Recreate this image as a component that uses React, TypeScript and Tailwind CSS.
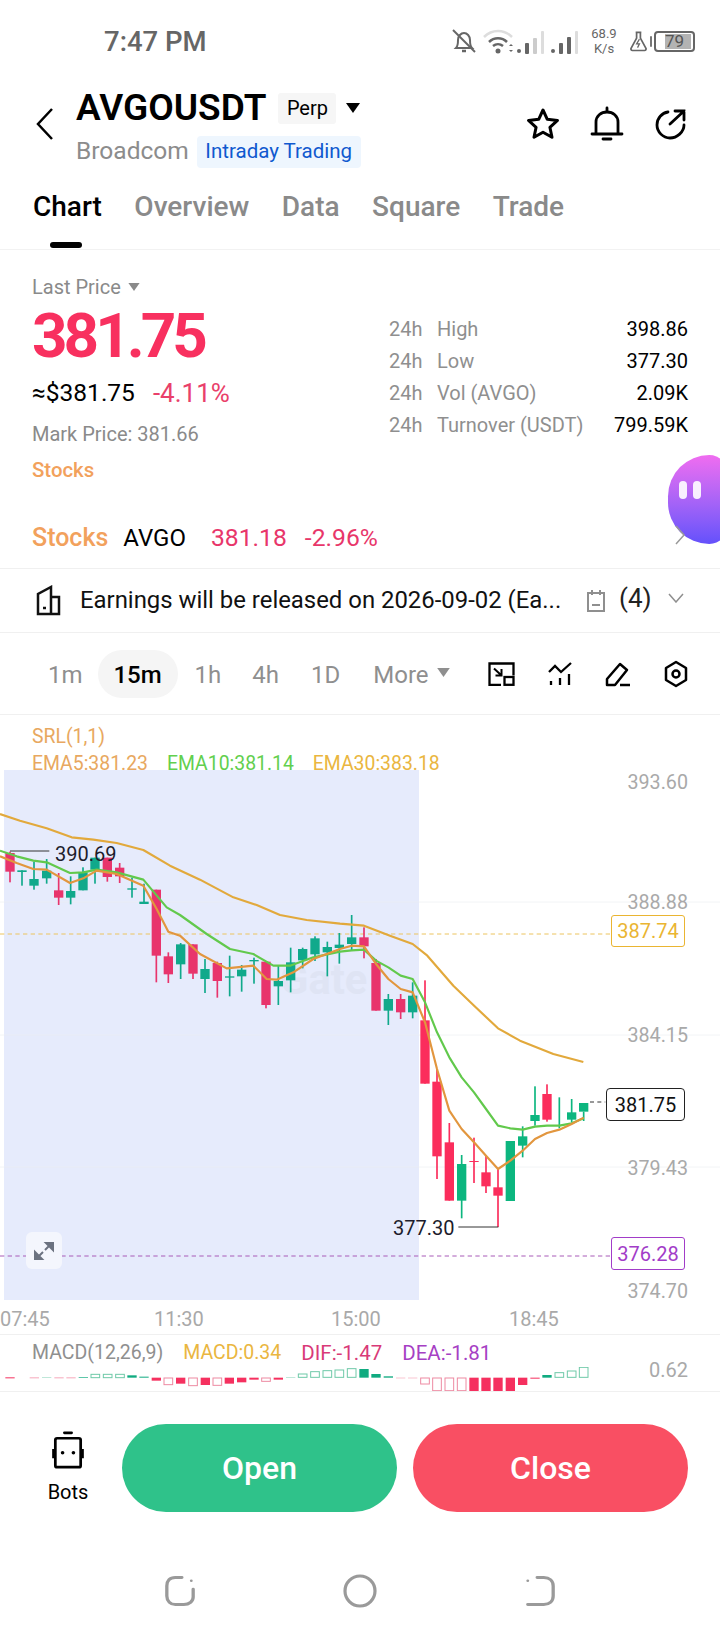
import React from "react";

type Candle = [number, number, number, number, number, boolean];

// chart coordinates are 3x page pixels, so the numbers read straight off a 3x crop
const leftCandles: Candle[] = [
  [30, 218, 222, 278, 310, false],
  [66, 274, 274, 279, 320, true],
  [102, 248, 300, 320, 332, true],
  [140, 240, 275, 298, 314, true],
  [176, 282, 334, 356, 378, false],
  [212, 292, 336, 356, 376, true],
  [249, 265, 280, 334, 334, true],
  [285, 236, 236, 272, 314, true],
  [322, 236, 236, 294, 308, false],
  [359, 252, 266, 292, 312, false],
  [396, 296, 328, 332, 356, true],
  [432, 314, 368, 375, 375, true],
  [469, 332, 332, 530, 610, false],
  [505, 520, 532, 586, 612, false],
  [542, 492, 496, 556, 600, true],
  [579, 496, 496, 584, 600, false],
  [615, 540, 570, 600, 642, true],
  [652, 548, 552, 606, 656, false],
  [689, 530, 592, 596, 652, true],
  [725, 558, 572, 592, 638, true],
  [762, 536, 543, 547, 614, true],
  [798, 548, 548, 678, 688, false],
  [835, 560, 606, 622, 678, true],
  [872, 506, 550, 604, 640, true],
  [908, 506, 510, 544, 568, true],
  [945, 472, 478, 526, 546, true],
  [982, 488, 504, 520, 592, true],
  [1018, 462, 497, 507, 554, true],
];

const rightCandles: Candle[] = [
  [35, 108, 175, 195, 215, true],
  [72, 145, 175, 202, 238, false],
  [108, 240, 252, 395, 395, false],
  [145, 345, 360, 395, 438, true],
  [182, 345, 360, 400, 420, false],
  [218, 310, 350, 400, 418, true],
  [255, 304, 424, 614, 614, false],
  [291, 570, 608, 832, 900, false],
  [328, 732, 790, 965, 965, false],
  [365, 828, 855, 965, 1018, true],
  [402, 776, 846, 849, 912, false],
  [438, 830, 880, 922, 942, false],
  [474, 870, 925, 950, 1044, false],
  [511, 786, 786, 966, 966, true],
  [548, 742, 772, 800, 835, true],
  [585, 622, 708, 726, 740, true],
  [621, 616, 645, 722, 728, false],
  [658, 655, 738, 741, 748, true],
  [695, 660, 700, 722, 730, true],
  [731, 698, 672, 698, 726, true],
];

const candles: Candle[] = [
  ...leftCandles.map(([x, h, t, b, l, up]): Candle => [x, h + 2340, t + 2340, b + 2340, l + 2340, up]),
  ...rightCandles.map(([x, h, t, b, l, up]): Candle => [x + 1020, h + 2640, t + 2640, b + 2640, l + 2640, up]),
];

const line = (left: number[][], right: number[][]) =>
  [...left.map(([x, y]) => `${x},${y + 2340}`), ...right.map(([x, y]) => `${x + 1020},${y + 2640}`)].join(" ");

const ema30 = line(
  [[0, 105], [60, 125], [140, 148], [215, 175], [280, 182], [350, 192], [430, 213], [510, 260], [600, 302], [700, 355], [770, 378], [840, 408], [920, 423], [1020, 434]],
  [[72, 140], [150, 170], [218, 195], [262, 230], [340, 320], [400, 378], [474, 448], [540, 485], [640, 525], [730, 549]],
);
const ema10 = line(
  [[0, 215], [50, 232], [100, 245], [140, 250], [210, 282], [250, 280], [290, 272], [350, 280], [430, 302], [500, 385], [540, 408], [620, 465], [690, 510], [760, 525], [820, 560], [870, 560], [940, 535], [1020, 518]],
  [[35, 214], [72, 212], [108, 245], [145, 265], [182, 290], [218, 300], [255, 370], [291, 460], [328, 535], [365, 595], [402, 640], [438, 690], [474, 740], [511, 748], [548, 752], [585, 743], [621, 740], [658, 740], [695, 733], [731, 718]],
);
const ema5 = line(
  [[0, 232], [50, 252], [100, 270], [140, 272], [210, 312], [250, 298], [290, 275], [350, 285], [430, 320], [470, 390], [505, 458], [540, 470], [600, 525], [680, 568], [760, 560], [800, 600], [830, 602], [880, 580], [940, 540], [1020, 510]],
  [[35, 200], [72, 202], [108, 255], [145, 300], [182, 330], [218, 340], [255, 430], [291, 570], [328, 695], [365, 750], [402, 790], [438, 830], [474, 870], [511, 845], [548, 815], [585, 780], [621, 762], [658, 752], [695, 735], [731, 716]],
);

// x, top, bottom, kind: f filled, o outline, t thin pale
const macdBars: [number, number, number, string, boolean][] = [
  [30, 115, 118, "f", false], [103, 115, 118, "t", false], [140, 115, 117, "t", true], [177, 115, 118, "t", false], [213, 115, 118, "t", false],
  [250, 114, 116, "f", true], [286, 105, 117, "o", true], [323, 105, 117, "o", true], [360, 105, 117, "o", true], [396, 109, 116, "f", true], [432, 113, 116, "f", true],
  [469, 116, 125, "f", false], [505, 116, 138, "o", false], [542, 116, 134, "f", false], [579, 116, 141, "o", false], [616, 116, 138, "f", false], [652, 116, 140, "o", false],
  [688, 116, 134, "f", false], [725, 116, 130, "f", false], [762, 116, 122, "f", false], [798, 116, 128, "o", false], [835, 116, 122, "f", false], [872, 114, 116, "t", true],
  [908, 104, 116, "o", true], [945, 97, 116, "o", true], [982, 94, 116, "o", true], [1018, 92, 116, "o", true], [1055, 88, 116, "o", true], [1092, 90, 116, "f", true],
  [1128, 105, 116, "f", true], [1165, 112, 116, "f", true], [1202, 116, 118, "t", false], [1238, 116, 118, "t", false], [1275, 116, 136, "o", false], [1311, 116, 156, "o", false],
  [1348, 116, 156, "o", false], [1385, 116, 156, "o", false], [1422, 116, 156, "f", false], [1458, 116, 156, "f", false], [1494, 116, 156, "f", false], [1531, 116, 156, "f", false],
  [1568, 116, 138, "f", false], [1605, 116, 119, "f", false], [1641, 108, 116, "f", true], [1678, 100, 116, "o", true], [1715, 95, 116, "o", true], [1751, 84, 116, "o", true],
];

const stats = [
  ["High", "398.86"],
  ["Low", "377.30"],
  ["Vol (AVGO)", "2.09K"],
  ["Turnover (USDT)", "799.59K"],
];

const Triangle = ({ className }: { className: string }) => (
  <svg viewBox="0 0 14 10" className={className}>
    <path d="M0 0h14L7 10z" fill="currentColor" />
  </svg>
);

const StatusIcons = () => (
  <div className="flex items-center text-[#666]">
    <svg width="26" height="28" viewBox="0 0 26 28" fill="none" stroke="#666" strokeWidth="2">
      <path d="M5 21c2-2 2-5 2-8 0-4 3-7 6-7s6 3 6 7c0 3 0 6 2 8z" />
      <path d="M11 24h4" strokeWidth="2.5" />
      <path d="M2 3l22 22" />
    </svg>
    <svg width="98" height="30" viewBox="0 0 98 30" className="ml-[5px]">
      <path d="M2 11c8-8 20-8 28 0" stroke="#ddd" strokeWidth="2.5" fill="none" />
      <path d="M7 16c5-5 13-5 18 0M11 20c3-2.500 7-2.500 10 0" stroke="#666" strokeWidth="2.500" fill="none" />
      <circle cx="16" cy="25" r="2.500" fill="#666" />
      <path d="M27 20l2-2 2 2zM27 24l2 2 2-2z" fill="#666" />
      <rect x="35" y="23" width="4" height="4" rx="2" fill="#666" />
      <rect x="43" y="17" width="4" height="11" rx="1" fill="#666" />
      <rect x="51" y="12" width="4" height="16" rx="1" fill="#ccc" />
      <rect x="59" y="5" width="3" height="23" rx="1" fill="#ddd" />
      <rect x="69" y="23" width="4" height="4" rx="2" fill="#666" />
      <rect x="77" y="17" width="4" height="11" rx="1" fill="#666" />
      <rect x="85" y="11" width="4" height="17" rx="1" fill="#666" />
      <rect x="93" y="5" width="3" height="23" rx="1" fill="#ddd" />
    </svg>
    <div className="w-[44px] ml-[2px] flex flex-col items-center text-[13px] leading-[15px] text-[#666]">
      <span>68.9</span>
      <span>K/s</span>
    </div>
    <svg width="19" height="22" viewBox="0 0 20 22" fill="none" stroke="#666" strokeWidth="1.800" className="ml-[3px]">
      <path d="M7 2h6M8 2v6L2 19c0 1 .5 2 1.500 2h13c1 0 1.500-1 1.500-2L12 8V2" strokeLinejoin="round" />
      <path d="M11 9l-3 5h3l-2 4" strokeWidth="1.300" />
    </svg>
    <div className="w-[2px] h-[11px] bg-[#777] ml-[2px] mr-[2px] rounded-sm" />
    <div className="w-[41px] h-[21px] border-2 border-[#666] rounded-[4px] flex items-center pl-[9px]">
      <div className="h-[15px] w-[26px] bg-[#b3b3b3] flex items-center text-[17px] leading-none text-[#555]">79</div>
    </div>
  </div>
);

const HeaderIcons = () => (
  <div className="flex items-center gap-[30px] text-black">
    <svg width="34" height="34" viewBox="0 0 34 34" fill="none" stroke="currentColor" strokeWidth="3" strokeLinejoin="round">
      <path d="M17 3l4.300 9.300 10.200 1.100-7.600 6.900 2.100 10L17 25.200l-9 5.100 2.100-10-7.600-6.900 10.200-1.100z" />
    </svg>
    <svg width="34" height="36" viewBox="0 0 34 36" fill="none" stroke="currentColor" strokeWidth="2.800">
      <path d="M6 27V16c0-6 5-10 11-10s11 4 11 10v11" />
      <path d="M2 28h30M13 33h8" strokeLinecap="round" />
      <path d="M17 2v3" strokeLinecap="round" />
    </svg>
    <svg width="34" height="34" viewBox="0 0 34 34" fill="none" stroke="currentColor" strokeWidth="2.800" strokeLinecap="round">
      <path d="M14 5C8 6 3 11 3 18c0 7 6 13 13 13s14-6 14-13" />
      <path d="M16 17L30 4M21 4h9v9" />
    </svg>
  </div>
);

const ToolIcons = () => (
  <div className="flex items-center gap-[33px] text-black">
    <svg width="27" height="24" viewBox="0 0 27 24" fill="none" stroke="currentColor" strokeWidth="2.300">
      <path d="M13 22.800H1.500V1.500h24v12" />
      <path d="M6 6.500l7 6.500M13.500 7v6.500H7.500" strokeWidth="2" />
      <rect x="16.500" y="15" width="9" height="7.800" />
    </svg>
    <svg width="24" height="24" viewBox="0 0 24 24" fill="none" stroke="currentColor" strokeWidth="2.300">
      <path d="M1 10l6-6 6 6L23 1" />
      <path d="M3 19v4M12 16v7M21 12v11" />
    </svg>
    <svg width="26" height="26" viewBox="0 0 26 26" fill="none" stroke="currentColor" strokeWidth="2.500" strokeLinejoin="round">
      <path d="M2 18L15 3l7 6-12 15H2z" />
      <path d="M15 24h10" />
    </svg>
    <svg width="24" height="28" viewBox="0 0 24 28" fill="none" stroke="currentColor" strokeWidth="2.500" strokeLinejoin="round">
      <path d="M12 2l10 6v12l-10 6-10-6V8z" />
      <circle cx="12" cy="14" r="3.500" />
    </svg>
  </div>
);

const CandleChart = () => (
  <svg viewBox="0 2313 2160 1602" width="720" height="534" className="absolute inset-0">
    {[2709, 3108, 3504].map((y) => (
      <line key={y} x1="0" x2="2160" y1={y} y2={y} stroke="#eceef2" strokeWidth="2" />
    ))}
    <text x="840" y="2985" fontSize="125" fontWeight="700" fill="#d5dce9" opacity="0.4" fontFamily="Roboto, sans-serif">Gate</text>
    <line x1="0" x2="1830" y1="2805" y2="2805" stroke="#ecc45f" strokeWidth="3" strokeDasharray="13 10" />
    <line x1="0" x2="1830" y1="3771" y2="3771" stroke="#a85bb8" strokeWidth="3" strokeDasharray="13 10" />
    {candles.map(([x, high, top, bottom, low, up]) => {
      const inside = x < 1257;
      const color = up ? (inside ? "#10a98b" : "#0cb67f") : inside ? "#e8346c" : "#fb2d5c";
      return (
        <g key={x} fill={color}>
          <rect x={x - 2.500} y={high} width="5" height={low - high} />
          <rect x={x - 14} y={top} width="28" height={bottom - top} />
        </g>
      );
    })}
    <polyline points={ema30} fill="none" stroke="#e2a93c" strokeWidth="6.500" strokeLinejoin="round" />
    <polyline points={ema10} fill="none" stroke="#62c94c" strokeWidth="6.500" strokeLinejoin="round" />
    <polyline points={ema5} fill="none" stroke="#e2963e" strokeWidth="6.500" strokeLinejoin="round" />
    <line x1="30" x2="148" y1="2556" y2="2556" stroke="#333" strokeWidth="3" />
    <line x1="1375" x2="1495" y1="3684" y2="3684" stroke="#333" strokeWidth="3" />
    <line x1="1770" x2="1816" y1="3309" y2="3309" stroke="#333" strokeWidth="3" strokeDasharray="12 10" />
  </svg>
);

const MacdBars = () => (
  <svg viewBox="0 84 2160 72" width="720" height="24" className="block">
    {macdBars.map(([x, top, bottom, kind, up]) => {
      const color = up ? "#10ab80" : "#f5305f";
      if (kind === "f") return <rect key={x} x={x - 14} y={top} width="28" height={bottom - top} fill={color} />;
      if (kind === "t") return <rect key={x} x={x - 14} y={top} width="28" height={bottom - top} fill={up ? "#9fdcc6" : "#f7a8bb"} />;
      return (
        <rect
          key={x}
          x={x - 13}
          y={top + 1}
          width="26"
          height={bottom - top - 2}
          fill="none"
          stroke={up ? "#6fc9a8" : "#ee8aa2"}
          strokeWidth="3"
        />
      );
    })}
  </svg>
);

export default function App() {
  return (
    <div className="relative w-[720px] h-[1640px] overflow-hidden bg-white flex flex-col font-['Roboto',sans-serif]">
      <div className="h-[82px] pl-[104px] pr-[25px] flex items-center justify-between">
        <span className="text-[27.500px] font-medium text-[#666] mt-[1px]">7:47 PM</span>
        <StatusIcons />
      </div>

      <div className="h-[103px] pl-[35px] pr-[32px] pt-[3px] flex items-start">
        <svg width="20" height="34" viewBox="0 0 20 34" fill="none" stroke="black" strokeWidth="2.500" className="mt-[22px]">
          <path d="M17 2L3 17l14 15" />
        </svg>
        <div className="ml-[21px] flex flex-col">
          <div className="flex items-center h-[46px]">
            <span className="text-[37px] font-semibold text-black">AVGOUSDT</span>
            <span className="ml-[12px] w-[58px] h-[31px] bg-[#f6f6f6] rounded-[3px] flex items-center justify-center text-[20px] text-black">Perp</span>
            <Triangle className="ml-[10px] w-[14px] h-[10px] text-black" />
          </div>
          <div className="flex items-center h-[41px]">
            <span className="text-[24.500px] text-[#8c8c8c]">Broadcom</span>
            <span className="ml-[8px] w-[164px] h-[32px] bg-[#eef6fe] rounded-[4px] flex items-center justify-center text-[20.500px] text-[#1059cf]">Intraday Trading</span>
          </div>
        </div>
        <div className="ml-auto mt-[21px]">
          <HeaderIcons />
        </div>
      </div>

      <div className="relative h-[65px] pl-[33px] flex items-start gap-[32.500px] border-b border-[#f2f2f2]">
        <span className="text-[28px] font-medium text-black leading-[44px]">Chart</span>
        <span className="text-[28px] font-medium text-[#8a8a8a] leading-[44px]">Overview</span>
        <span className="text-[28px] font-medium text-[#8a8a8a] leading-[44px]">Data</span>
        <span className="text-[28px] font-medium text-[#8a8a8a] leading-[44px]">Square</span>
        <span className="text-[28px] font-medium text-[#8a8a8a] leading-[44px]">Trade</span>
        <div className="absolute left-[50px] bottom-[1px] w-[32px] h-[6px] rounded-full bg-black" />
      </div>

      <div className="h-[252px] pl-[32px] pr-[32px] flex">
        <div className="w-[357px] flex flex-col">
          <div className="mt-[24px] flex items-center h-[26px] gap-[7px] text-[20px] text-[#8a8a8a]">
            <span>Last Price</span>
            <Triangle className="w-[12px] h-[8px] text-[#8a8a8a]" />
          </div>
          <span className="mt-[2px] text-[62px] leading-[68px] font-bold text-[#f8305f] tracking-[-4px]">381.75</span>
          <div className="mt-[8px] flex items-center h-[30px]">
            <span className="text-[24.500px] text-black">≈$381.75</span>
            <span className="ml-[18px] text-[26px] text-[#e9406a]">-4.11%</span>
          </div>
          <span className="mt-[12px] h-[28px] text-[20px] leading-[28px] text-[#8a8a8a]">Mark Price: 381.66</span>
          <span className="mt-[9px] text-[20.400px] leading-[26px] font-medium text-[#f2a15c]">Stocks</span>
        </div>
        <div className="flex-1 pt-[63px] flex flex-col">
          {stats.map(([label, value]) => (
            <div key={label} className="h-[32px] flex items-center text-[20px]">
              <span className="w-[48px] text-[#8f8f8f]">24h</span>
              <span className="text-[#8f8f8f]">{label}</span>
              <span className="ml-auto text-black">{value}</span>
            </div>
          ))}
        </div>
      </div>

      <div className="h-[67px] pl-[32px] pr-[34px] pt-[5px] flex items-center border-b border-[#f0f0f0]">
        <span className="text-[25px] font-medium text-[#f2a15c]">Stocks</span>
        <span className="ml-[15px] text-[24px] text-black">AVGO</span>
        <span className="ml-[25px] text-[24.700px] text-[#e8366a]">381.18</span>
        <span className="ml-[18px] text-[24.700px] text-[#e8366a]">-2.96%</span>
        <svg width="12" height="20" viewBox="0 0 12 20" fill="none" stroke="#999" strokeWidth="1.500" className="relative z-10 ml-auto mt-[-5px]">
          <path d="M2 1l8 9-8 9" />
        </svg>
      </div>

      <div className="h-[64px] pl-[36px] pr-[34px] flex items-center border-b border-[#f0f0f0]">
        <svg width="25" height="32" viewBox="0 0 25 32" fill="none" stroke="#111" strokeWidth="2.500">
          <path d="M2 29V9l13-7v27zM15 12h8v17H2" />
          <path d="M7 23h3" />
        </svg>
        <span className="ml-[19px] w-[484px] text-[23.900px] text-[#111] whitespace-nowrap">Earnings will be released on 2026-09-02 (Ea...</span>
        <svg width="20" height="24" viewBox="0 0 20 24" fill="none" stroke="#8f8f8f" strokeWidth="2" className="ml-[22px]">
          <path d="M2 4h16v18H2zM6 1v5M14 1v5M6 16h8" />
        </svg>
        <span className="ml-[13px] text-[26px] text-[#222] mt-[-4px]">(4)</span>
        <svg width="16" height="10" viewBox="0 0 16 10" fill="none" stroke="#8f8f8f" strokeWidth="1.500" className="ml-auto mr-[2px] mt-[-6px]">
          <path d="M1 1l7 8 7-8" />
        </svg>
      </div>

      <div className="h-[82px] pl-[48px] pr-[32px] flex items-center border-b border-[#f0f0f0] text-[24px] text-[#8f8f8f]">
        <span className="mt-[3px]">1m</span>
        <span className="ml-[15px] w-[80px] h-[48px] pt-[3px] rounded-full bg-[#f5f5f5] flex items-center justify-center font-medium text-black">15m</span>
        <span className="ml-[17px] mt-[3px]">1h</span>
        <span className="ml-[31px] mt-[3px]">4h</span>
        <span className="ml-[32px] mt-[3px]">1D</span>
        <span className="ml-[33px] mt-[3px]">More</span>
        <Triangle className="ml-[8px] mt-[-3px] w-[13px] h-[9px] text-[#8f8f8f]" />
        <div className="ml-auto">
          <ToolIcons />
        </div>
      </div>

      <div className="h-[55px] pl-[32px] text-[19.400px] leading-[27px] pt-[8px]">
        <div className="text-[#e8a860]">SRL(1,1)</div>
        <div className="flex gap-[19px]">
          <span className="text-[#e8a860]">EMA5:381.23</span>
          <span className="text-[#62cf4e]">EMA10:381.14</span>
          <span className="text-[#eab640]">EMA30:383.18</span>
        </div>
      </div>

      <div className="relative h-[534px] text-[20px]">
        <div className="absolute left-[4px] top-0 w-[415px] h-[530px] bg-[#e6ebfc]" />
        <CandleChart />
        <span className="absolute right-[32px] top-[-2px] text-[19.700px] text-[#a9a9a9]">393.60</span>
        <span className="absolute right-[32px] top-[118px] text-[19.700px] text-[#a9a9a9]">388.88</span>
        <span className="absolute right-[32px] top-[251px] text-[19.700px] text-[#a9a9a9]">384.15</span>
        <span className="absolute right-[32px] top-[384px] text-[19.700px] text-[#a9a9a9]">379.43</span>
        <span className="absolute right-[32px] top-[507px] text-[19.700px] text-[#a9a9a9]">374.70</span>
        <span className="absolute left-[55px] top-[69px] text-[#1d1d2c]">390.69</span>
        <span className="absolute left-[393px] top-[443px] text-[#1d1d2c]">377.30</span>
        <div className="absolute left-[611px] top-[145px] w-[74px] h-[32px] bg-white border border-[#eab532] rounded-[3px] flex items-center justify-center text-[#eab532] text-[20px]">387.74</div>
        <div className="absolute left-[606px] top-[318px] w-[79px] h-[33px] bg-white border border-[#222] rounded-[4px] flex items-center justify-center text-[#111] text-[20px]">381.75</div>
        <div className="absolute left-[611px] top-[467px] w-[74px] h-[33px] bg-white border border-[#a23cc8] rounded-[3px] flex items-center justify-center text-[#a23cc8] text-[20px]">376.28</div>
        <div className="absolute left-[26px] top-[462px] w-[36px] h-[37px] rounded-[6px] bg-[#f4f6fd] flex items-center justify-center">
          <svg width="20" height="20" viewBox="0 0 20 20" fill="#6b7280" stroke="#6b7280" strokeWidth="2">
            <path d="M11 9l7-7M12 2h7v7z" />
            <path d="M9 11l-7 7M8 18H1v-7z" />
          </svg>
        </div>
      </div>

      <div className="h-[31px] flex items-center text-[20px] text-[#a9a9a9] border-b border-[#f0f0f0]">
        <span className="w-[154px]">07:45</span>
        <span className="w-[177px]">11:30</span>
        <span className="w-[178px]">15:00</span>
        <span>18:45</span>
      </div>

      <div className="relative h-[57px] border-b border-[#f0f0f0]">
        <div className="pl-[32px] pt-[6px] flex text-[19.500px] leading-[24px]">
          <span className="text-[#8f8f8f]">MACD(12,26,9)</span>
          <span className="ml-[20px] text-[#eab640]">MACD:0.34</span>
          <span className="ml-[20px] text-[20.500px] text-[#d93a78]">DIF:-1.47</span>
          <span className="ml-[20px] text-[20.500px] text-[#a63fc4]">DEA:-1.81</span>
        </div>
        <div className="absolute left-0 bottom-0">
          <MacdBars />
        </div>
        <span className="absolute right-[32px] bottom-[6px] text-[20px] text-[#a9a9a9]">0.62</span>
      </div>

      <div className="mt-[32px] h-[88px] pr-[32px] flex items-center">
        <div className="w-[122px] pl-[14px] flex flex-col items-center">
          <svg width="34" height="38" viewBox="0 0 36 42" fill="none" stroke="black" strokeWidth="3">
            <path d="M14 2h8" strokeLinecap="round" />
            <rect x="4" y="8" width="28" height="32" rx="2" />
            <path d="M2 20v10M34 20v10" />
            <circle cx="12" cy="24" r="2" fill="black" stroke="none" />
            <circle cx="24" cy="24" r="2" fill="black" stroke="none" />
          </svg>
          <span className="mt-[10px] text-[20px] text-black leading-[26px]">Bots</span>
        </div>
        <div className="flex-1 h-[88px] rounded-full bg-[#2fc28a] flex items-center justify-center text-[32px] font-medium text-white">Open</div>
        <div className="ml-[16px] flex-1 h-[88px] rounded-full bg-[#f94f63] flex items-center justify-center text-[32px] font-medium text-white">Close</div>
      </div>

      <div className="mt-[62px] pl-[164px] flex items-center gap-[147px]">
        <svg width="32" height="34" viewBox="0 0 34 40" fill="none" stroke="#9a9a9a" strokeWidth="3.500" strokeLinecap="round" preserveAspectRatio="none">
          <path d="M19 4h-7C6 4 3 8 3 14v12c0 6 4 10 9 10h9c6 0 10-4 10-9V18" />
          <circle cx="29" cy="8" r="1.500" fill="#9a9a9a" stroke="none" />
        </svg>
        <svg width="34" height="34" viewBox="0 0 34 34" fill="none" stroke="#9a9a9a" strokeWidth="3.200">
          <circle cx="17" cy="17" r="15" />
        </svg>
        <svg width="32" height="34" viewBox="0 0 34 40" fill="none" stroke="#9a9a9a" strokeWidth="3.500" strokeLinecap="round" preserveAspectRatio="none">
          <path d="M14 4h7c6 0 10 4 10 10v12c0 6-4 10-10 10H4" />
          <circle cx="4" cy="8" r="1.500" fill="#9a9a9a" stroke="none" />
        </svg>
      </div>

      <div className="absolute left-[668px] top-[455px] w-[60px] h-[89px] rounded-l-[44px] rounded-r-[20px] bg-gradient-to-b from-[#f06cf0] to-[#6450fb] flex gap-[6px] pl-[11px] pt-[26px]">
        <div className="w-[8px] h-[18px] rounded-full bg-white/90" />
        <div className="w-[8px] h-[18px] rounded-full bg-white/90" />
      </div>
    </div>
  );
}
